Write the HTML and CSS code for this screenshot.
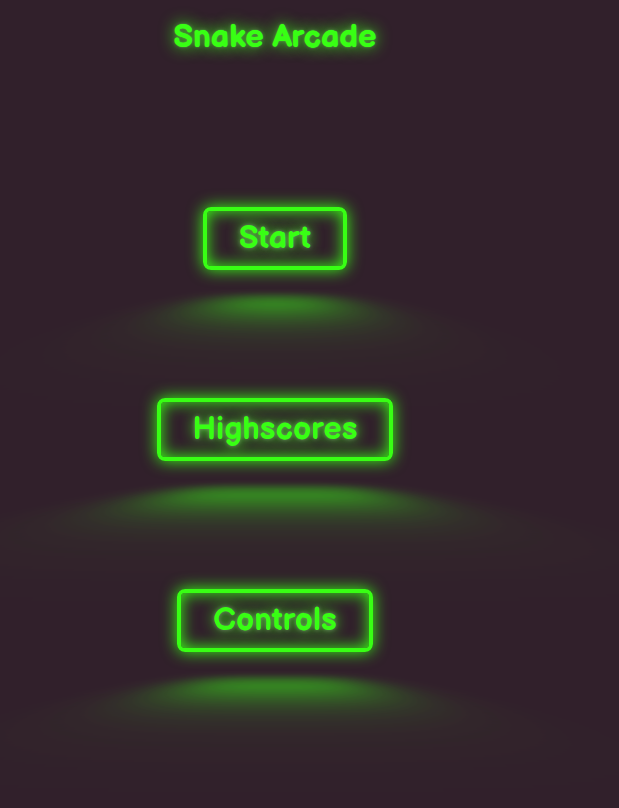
FILE: index.html
```html
<!DOCTYPE html>
<html lang="en">
<head>
<meta charset="utf-8">
<title>Snake Arcade</title>
<link rel="stylesheet" href="styles.css">
</head>
<body>
<main class="menu">
  <h1 class="title">Snake Arcade</h1>
  <nav class="actions">
    <button class="neon" type="button">Start</button>
    <button class="neon" type="button">Highscores</button>
    <button class="neon" type="button">Controls</button>
  </nav>
</main>
</body>
</html>
```

FILE: styles.css
```css
:root {
  --neon: hsl(111, 100%, 54%);
  --bg: hsl(323, 21%, 16%);
}

*,
*::before,
*::after {
  box-sizing: border-box;
}

body {
  margin: 0;
  min-height: 100vh;
  overflow: hidden;
  background: var(--bg);
  color: var(--neon);
  font-family: "Balsamiq Sans", "Open Sans", sans-serif;
}

.menu {
  display: flex;
  flex-direction: column;
  align-items: center;
  padding: 18px 69px 0 0;
}

.title {
  margin: 0;
  font-size: 32px;
  line-height: 40px;
  font-weight: 700;
  text-shadow: 0 0 1px var(--neon), 0 0 4px hsl(0 0% 100% / 0.2), 0 0 16px var(--neon);
}

.actions {
  display: flex;
  flex-direction: column;
  align-items: center;
  gap: 128px;
  margin-top: 149px;
}

.neon {
  position: relative;
  padding: 8px 32px;
  border: 4px solid var(--neon);
  border-radius: 8px;
  background: none;
  color: var(--neon);
  font: 700 32px/39px "Balsamiq Sans", "Open Sans", sans-serif;
  text-shadow: 0 0 4px hsl(0 0% 100% / 0.3), 0 0 14px var(--neon);
  box-shadow: inset 0 0 16px 0 var(--neon), 0 0 16px 0 var(--neon);
}

/* Light cast on the floor below each sign */
.neon::before {
  content: "";
  position: absolute;
  top: 120%;
  left: 0;
  width: 100%;
  height: 100%;
  background: var(--neon);
  transform: perspective(32px) rotateX(40deg) scale(1, 0.35);
  filter: blur(32px);
  opacity: 0.7;
  pointer-events: none;
}
```
